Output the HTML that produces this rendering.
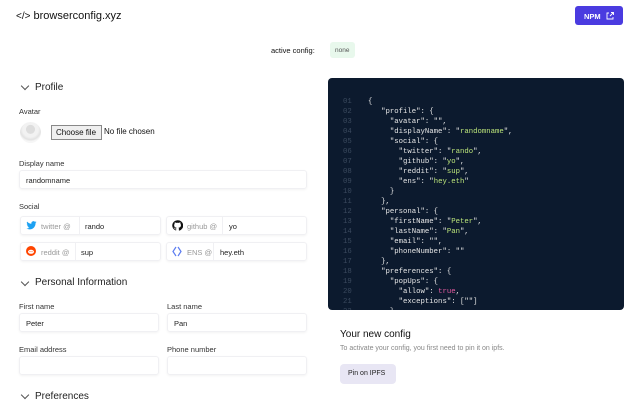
<!DOCTYPE html>
<html><head><meta charset="utf-8"><style>
*{box-sizing:border-box;margin:0;padding:0}
body{width:640px;height:400px;overflow:hidden;background:#fff;font-family:"Liberation Sans",sans-serif;color:#111;position:relative}
.a{position:absolute}
.lbl{font-size:7.5px;color:#333}
.inp{position:absolute;height:19px;border:1px solid #f0f0f3;border-radius:3px;box-shadow:0 1px 2px rgba(0,0,0,.05);font-size:7.5px;padding:5px 6px;color:#222}
.h{font-size:10px;color:#222}
.chev{position:absolute;width:6px;height:6px;border-right:1px solid #555;border-bottom:1px solid #555;transform:rotate(45deg)}
.soc{position:absolute;height:19px;border:1px solid #f0f0f3;border-radius:3px;box-shadow:0 1px 2px rgba(0,0,0,.05);font-size:7.5px}
.soc .ad{position:absolute;left:0;top:0;bottom:0;border-right:1px solid #f0f0f3;color:#999;padding:5px 0 0 20px}
.soc .v{position:absolute;top:5px;color:#222}
.ic{position:absolute;left:5px;top:3px}
pre{font-family:"Liberation Mono",monospace;font-size:7.3px;line-height:10px;color:#e6e6e6}
.n{color:#3b4a5e}.s{color:#bde67a}.t{color:#e55aa0}
</style></head><body>
<div class="a" style="left:16px;top:10px;font-size:11px;color:#111"><span style="font-size:10px">&lt;/&gt;</span> browserconfig.xyz</div>
<div class="a" style="left:575px;top:6px;width:48px;height:19px;background:#4a3be0;border-radius:3px;color:#fff;font-size:7.5px;font-weight:bold;padding:6px 0 0 9px">NPM <svg width="8" height="8" viewBox="0 0 8 8" style="vertical-align:-1px;margin-left:3px"><path d="M3 1H1v6h6V5M4 4l3.5-3.5M5 .5h2.5V3" stroke="#fff" fill="none" stroke-width=".9"/></svg></div>
<div class="a" style="left:271px;top:46px;font-size:7.5px">active config:</div>
<div class="a" style="left:330px;top:42px;width:25px;height:16px;background:#e8f8ec;border-radius:3px;font-size:6.5px;color:#555;padding:5px 0 0 5px">none</div>

<div class="chev" style="left:22px;top:83px"></div><div class="a h" style="left:35px;top:82px">Profile</div>
<div class="a lbl" style="left:19px;top:107px">Avatar</div>
<div class="a" style="left:20px;top:122px;width:21px;height:21px;border-radius:50%;background:radial-gradient(circle at 50% 35%,#ddd 25%,#f2f2f2 27%,#f2f2f2 45%,#e2e2e2 60%,#f6f6f6 70%)"></div>
<div class="a" style="left:51px;top:125px;width:51px;height:15px;border:1px solid #888;background:#efefef;font-size:8px;padding:2px 0 0 4px">Choose file</div>
<div class="a" style="left:104px;top:127px;font-size:8px">No file chosen</div>
<div class="a lbl" style="left:19px;top:159px">Display name</div>
<div class="inp" style="left:19px;top:170px;width:288px">randomname</div>
<div class="a lbl" style="left:19px;top:202px">Social</div>
<div class="soc" style="left:20px;top:216px;width:141px"><div class="ad" style="width:59px"><svg class="ic" width="11" height="11" viewBox="0 0 24 24"><path fill="#1da1f2" d="M23 5a9 9 0 01-2.6.7A4.6 4.6 0 0022.4 3a9 9 0 01-2.9 1.1 4.5 4.5 0 00-7.7 4.1A12.8 12.8 0 012.5 3.5a4.5 4.5 0 001.4 6 4.5 4.5 0 01-2-.6 4.5 4.5 0 003.6 4.5 4.5 4.5 0 01-2 .1 4.5 4.5 0 004.2 3.1A9 9 0 011 18.5 12.8 12.8 0 008 20.5c8.3 0 12.8-6.9 12.8-12.8v-.6A9 9 0 0023 5z"/></svg>twitter @</div><span class="v" style="left:64px">rando</span></div>
<div class="soc" style="left:166px;top:216px;width:141px"><div class="ad" style="width:56px"><svg class="ic" width="11" height="11" viewBox="0 0 24 24"><path fill="#111" d="M12 .5a11.5 11.5 0 00-3.6 22.4c.6.1.8-.3.8-.6v-2c-3.2.7-3.9-1.5-3.9-1.5-.5-1.3-1.3-1.7-1.3-1.7-1-.7.1-.7.1-.7 1.2.1 1.8 1.2 1.8 1.2 1 1.8 2.7 1.3 3.4 1 .1-.8.4-1.3.7-1.6-2.6-.3-5.300-1.3-5.3-5.7 0-1.3.5-2.3 1.2-3.1-.1-.3-.5-1.5.1-3.1 0 0 1-.3 3.2 1.2a11 11 0 015.8 0c2.2-1.5 3.2-1.2 3.2-1.2.6 1.6.2 2.8.1 3.1.7.8 1.2 1.8 1.2 3.1 0 4.4-2.7 5.4-5.3 5.7.4.4.8 1.1.8 2.2v3.3c0 .3.2.7.8.6A11.5 11.5 0 0012 .5z"/></svg>github @</div><span class="v" style="left:62px">yo</span></div>
<div class="soc" style="left:20px;top:242px;width:141px"><div class="ad" style="width:55px"><svg class="ic" width="10" height="10" viewBox="0 0 10 10"><circle cx="5" cy="5" r="5" fill="#ff4500"/><ellipse cx="5" cy="5.8" rx="3" ry="2" fill="#fff"/><circle cx="4" cy="5.6" r=".5" fill="#ff4500"/><circle cx="6" cy="5.6" r=".5" fill="#ff4500"/></svg>reddit @</div><span class="v" style="left:60px">sup</span></div>
<div class="soc" style="left:166px;top:242px;width:141px"><div class="ad" style="width:47px"><svg class="ic" width="10" height="11" viewBox="0 0 10 11"><path d="M4 1L1 5.5 4 10M6 1l3 4.5L6 10" stroke="#5b7cf0" fill="none" stroke-width="1.2"/></svg>ENS @</div><span class="v" style="left:53px">hey.eth</span></div>

<div class="chev" style="left:22px;top:279px"></div><div class="a h" style="left:35px;top:277px">Personal Information</div>
<div class="a lbl" style="left:19px;top:302px">First name</div>
<div class="a lbl" style="left:167px;top:302px">Last name</div>
<div class="inp" style="left:19px;top:313px;width:140px">Peter</div>
<div class="inp" style="left:167px;top:313px;width:140px">Pan</div>
<div class="a lbl" style="left:19px;top:345px">Email address</div>
<div class="a lbl" style="left:167px;top:345px">Phone number</div>
<div class="inp" style="left:19px;top:356px;width:140px"></div>
<div class="inp" style="left:167px;top:356px;width:140px"></div>
<div class="chev" style="left:22px;top:392px"></div><div class="a h" style="left:35px;top:391px">Preferences</div>

<div class="a" style="left:328px;top:78px;width:296px;height:232px;background:#0c1a2e;border-radius:4px;overflow:hidden">
<pre class="a" style="left:15px;top:19px"><span class="n">01
02
03
04
05
06
07
08
09
10
11
12
13
14
15
16
17
18
19
20
21
22</span></pre>
<pre class="a" style="left:40px;top:19px">{
   "profile": {
     "avatar": "",
     "displayName": "<span class="s">randomname</span>",
     "social": {
       "twitter": "<span class="s">rando</span>",
       "github": "<span class="s">yo</span>",
       "reddit": "<span class="s">sup</span>",
       "ens": "<span class="s">hey.eth</span>"
     }
   },
   "personal": {
     "firstName": "<span class="s">Peter</span>",
     "lastName": "<span class="s">Pan</span>",
     "email": "",
     "phoneNumber": ""
   },
   "preferences": {
     "popUps": {
       "allow": <span class="t">true</span>,
       "exceptions": [""]
     }</pre>
</div>
<div class="a" style="left:340px;top:329px;font-size:10px;color:#111">Your new config</div>
<div class="a" style="left:340px;top:345px;font-size:7px;color:#888">To activate your config, you first need to pin it on ipfs.</div>
<div class="a" style="left:340px;top:364px;width:56px;height:20px;background:#e8e6f4;border-radius:4px;font-size:7px;color:#222;padding:6px 0 0 8px">Pin on IPFS</div>
</body></html>
